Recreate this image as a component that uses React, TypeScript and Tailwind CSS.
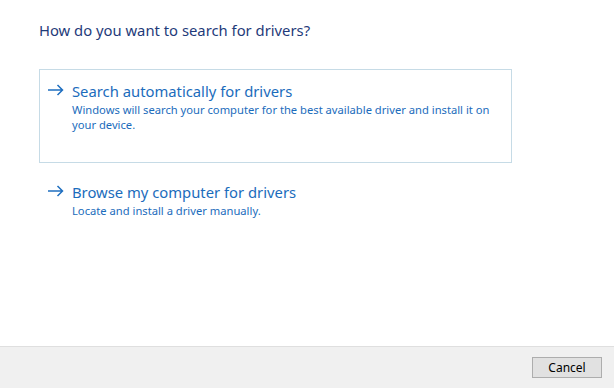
import React from "react";

function Arrow() {
  return (
    <svg width="17" height="12" viewBox="0 0 17 12" className="shrink-0">
      <path d="M1 6H15.5M10.5 1L15.5 6L10.5 11" fill="none" stroke="#1f6fc0" strokeWidth="1.5" />
    </svg>
  );
}

function Option({ title, desc, boxed }: { title: string; desc: React.ReactNode; boxed?: boolean }) {
  return (
    <div
      className={
        "flex w-[473px] " +
        (boxed ? "border border-[#c6dbe6] h-[94px] pt-[11px]" : "border border-transparent pt-[8px]")
      }
    >
      <div className="w-[32px] flex justify-end pr-[8px] pt-[3px]">
        <Arrow />
      </div>
      <div className="flex flex-col">
        <div className="text-[14.8px] leading-[20px] text-[#1b6cbc] whitespace-nowrap">{title}</div>
        <div className="text-[11.2px] leading-[15px] text-[#1b6cbc] mt-[1px] whitespace-nowrap">{desc}</div>
      </div>
    </div>
  );
}

export default function App() {
  return (
    <div
      className="w-[614px] h-[388px] bg-white flex flex-col"
      style={{ fontFamily: '"Noto Sans", "Open Sans", sans-serif' }}
    >
      <div className="flex-1 pl-[39px] pt-[20px]">
        <div className="text-[14.8px] leading-[20px] text-[#1f3b7a] whitespace-nowrap">How do you want to search for drivers?</div>
        <div className="mt-[29px]">
          <Option
            boxed
            title="Search automatically for drivers"
            desc={
              <>
                Windows will search your computer for the best available driver and install it on
                <br />
                your device.
              </>
            }
          />
        </div>
        <div className="mt-[10px]">
          <Option title="Browse my computer for drivers" desc="Locate and install a driver manually." />
        </div>
      </div>
      <div className="h-[42px] bg-[#f0f0f0] border-t border-[#dfdfdf] flex items-center justify-end pr-[12px]">
        <button className="w-[70px] h-[21px] bg-[#e1e1e1] border border-[#adadad] text-[12px] text-black leading-none">
          Cancel
        </button>
      </div>
    </div>
  );
}
